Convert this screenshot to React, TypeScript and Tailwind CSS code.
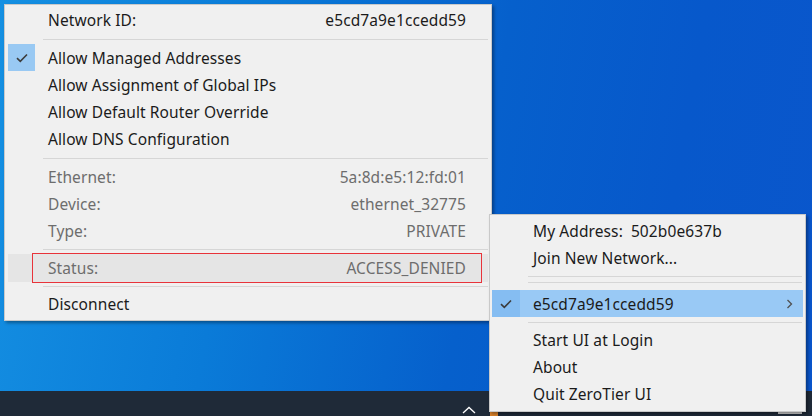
import React from "react";

const font = { fontFamily: '"Noto Sans", "Noto Sans CJK SC", sans-serif' };

function Check() {
  return (
    <svg width="12" height="10" viewBox="0 0 12 10" fill="none">
      <path d="M1 5.2 L4.3 8.3 L11 1.5" stroke="#3c3c3c" strokeWidth="1.6" />
    </svg>
  );
}

function Sep({ h, off }: { h: string; off: string }) {
  return (
    <div className={`${h} ${off}`}>
      <div className="ml-[38px] mr-[3px] h-px bg-[#d6d6d6]" />
    </div>
  );
}

function Row({
  label,
  value,
  grey,
  checked,
}: {
  label: string;
  value?: string;
  grey?: boolean;
  checked?: boolean;
}) {
  return (
    <div className="relative flex h-[27px] items-center pl-[43px] pr-[25px] pt-[2px]">
      {checked && (
        <div className="absolute left-[3px] top-0 flex h-[27px] w-[27px] items-center justify-center bg-[#99c9f3]">
          <Check />
        </div>
      )}
      <span className={grey ? "text-[#6d6d6d]" : "text-[#1b1b1b]"}>{label}</span>
      {value && (
        <span className={`ml-auto ${grey ? "text-[#6d6d6d]" : "text-[#1b1b1b]"}`}>{value}</span>
      )}
    </div>
  );
}

export default function App() {
  return (
    <div
      style={font}
      className="relative h-[416px] w-[812px] overflow-hidden bg-[linear-gradient(100deg,#1590e2_0%,#0a7bd8_30%,#0660cc_58%,#0758cb_80%,#0a56cc_100%)] text-[15.5px] tracking-[0.1px]"
    >
      {/* taskbar */}
      <div className="absolute bottom-0 left-0 h-[25px] w-full bg-[#1f2a38]">
        <svg className="absolute left-[462px] top-[15px]" width="14" height="8" viewBox="0 0 14 8">
          <path d="M1 7 L7 1.5 L13 7" stroke="#ffffff" strokeWidth="1.3" fill="none" />
        </svg>
        <div className="absolute left-[490px] top-[21px] h-[4px] w-[8px] bg-[#d9822b]" />
        <div className="absolute left-[778px] top-[21px] h-[2px] w-[24px] bg-[#c8c8c8]" />
      </div>

      {/* network submenu */}
      <div className="absolute left-[4px] top-[4px] w-[488px] border border-[#c9c9c9] bg-[#f0f0f0] pb-[2px] pt-[1px] shadow-[2px_2px_3px_rgba(0,0,0,0.35)]">
        <Row label="Network ID:" value="e5cd7a9e1ccedd59" />
        <Sep h="h-[11px]" off="pt-[6px]" />
        <Row label="Allow Managed Addresses" checked />
        <Row label="Allow Assignment of Global IPs" />
        <Row label="Allow Default Router Override" />
        <Row label="Allow DNS Configuration" />
        <Sep h="h-[11px]" off="pt-[6px]" />
        <Row label="Ethernet:" value="5a:8d:e5:12:fd:01" grey />
        <Row label="Device:" value="ethernet_32775" grey />
        <Row label="Type:" value="PRIVATE" grey />
        <Sep h="h-[10px]" off="pt-[5px]" />
        <div className="ml-[3px] mr-[3px] flex h-[28px] items-center bg-[#e5e5e5] pl-[40px] pr-[22px] pt-[2px] text-[#6d6d6d]">
          <span>Status:</span>
          <span className="ml-auto">ACCESS_DENIED</span>
        </div>
        <Sep h="h-[8px]" off="pt-[4px]" />
        <div className="flex h-[28px] items-center pl-[43px] pt-[2px] text-[#1b1b1b]">Disconnect</div>
      </div>

      {/* red annotation box */}
      <div className="absolute left-[32px] top-[253px] h-[30px] w-[450px] border border-[#e8333a]" />

      {/* tray menu */}
      <div className="absolute left-[489px] top-[214px] w-[317px] border border-[#c9c9c9] bg-[#f0f0f0] pb-[4px] pt-[2px] shadow-[2px_2px_3px_rgba(0,0,0,0.35)]">
        <div className="flex h-[27px] items-center pl-[43px] pt-[2px] text-[#1b1b1b]">
          My Address:<span className="ml-[8px]">502b0e637b</span>
        </div>
        <div className="flex h-[27px] items-center pl-[43px] pt-[2px] text-[#1b1b1b]">Join New Network...</div>
        <Sep h="h-[8px]" off="pt-[5px]" />
        <Sep h="h-[11px]" off="pt-[3px]" />
        <div className="mx-[2px] flex h-[27px] items-center bg-[#99c9f5]">
          <div className="flex h-full w-[28px] items-center justify-center bg-[#85bdf2]">
            <Check />
          </div>
          <span className="ml-[13px] pt-[2px] text-[#1b1b1b]">e5cd7a9e1ccedd59</span>
          <svg className="ml-auto mr-[10px]" width="7" height="10" viewBox="0 0 7 10">
            <path d="M1.5 1 L5.5 5 L1.5 9" stroke="#505050" strokeWidth="1.3" fill="none" />
          </svg>
        </div>
        <Sep h="h-[9px]" off="pt-[5px]" />
        <div className="flex h-[27px] items-center pl-[43px] pt-[2px] text-[#1b1b1b]">Start UI at Login</div>
        <div className="flex h-[27px] items-center pl-[43px] pt-[2px] text-[#1b1b1b]">About</div>
        <div className="flex h-[27px] items-center pl-[43px] pt-[2px] text-[#1b1b1b]">Quit ZeroTier UI</div>
      </div>
    </div>
  );
}
